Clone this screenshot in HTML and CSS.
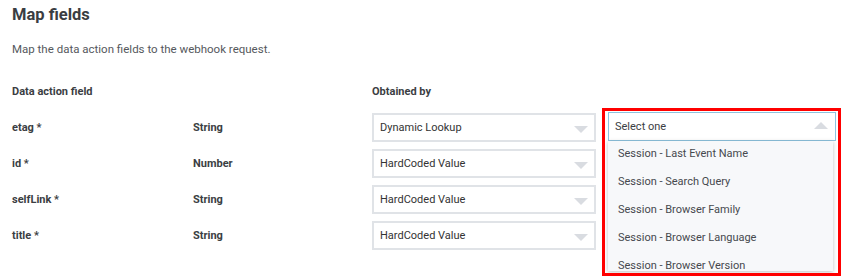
FILE: index.html
```html
<!DOCTYPE html>
<html lang="en">
<head>
  <meta charset="UTF-8" />
  <title>Map fields</title>
  <link rel="stylesheet" href="styles.css">
</head>
<body>
  <div class="page">
    <h1>Map fields</h1>
    <p class="intro">Map the data action fields to the webhook request.</p>

    <div class="fields">
      <div class="head">Data action field</div>
      <div class="head"></div>
      <div class="head">Obtained by</div>
      <div class="head"></div>

      <div class="name">etag *</div>
      <div class="type">String</div>
      <div class="select"><span>Dynamic Lookup</span><i class="arrow"></i></div>
      <div class="picker">
        <div class="select open"><span>Select one</span><i class="arrow up"></i></div>
        <ul class="options">
          <li>Session - Last Event Name</li>
          <li>Session - Search Query</li>
          <li>Session - Browser Family</li>
          <li>Session - Browser Language</li>
          <li>Session - Browser Version</li>
        </ul>
      </div>

      <div class="name">id *</div>
      <div class="type">Number</div>
      <div class="select"><span>HardCoded Value</span><i class="arrow"></i></div>
      <div></div>

      <div class="name">selfLink *</div>
      <div class="type">String</div>
      <div class="select"><span>HardCoded Value</span><i class="arrow"></i></div>
      <div></div>

      <div class="name">title *</div>
      <div class="type">String</div>
      <div class="select"><span>HardCoded Value</span><i class="arrow"></i></div>
      <div></div>
    </div>

    <!-- highlight annotation -->
    <div class="highlight"></div>
  </div>
</body>
</html>
```

FILE: styles.css
```css
* {
  margin: 0;
  padding: 0;
  box-sizing: border-box;
}
body {
  background: #fff;
  font-family: Roboto, "Liberation Sans", sans-serif;
  color: #3b3e43;
}
.page {
  position: relative;
  width: 842px;
  height: 278px;
  padding: 4px 12px 0;
  overflow: hidden;
}
h1 {
  font-size: 16.5px;
  font-weight: 700;
  line-height: 22px;
  color: #3a3d42;
}
.intro {
  margin-top: 15px;
  font-size: 11.5px;
  line-height: 16px;
  color: #55585d;
}
/* Field mapping grid */
.fields {
  margin-top: 27px;
  display: grid;
  grid-template-columns: 181px 179px 235px 1fr;
  grid-template-rows: 22px repeat(4, 29px);
  row-gap: 7px;
  align-items: center;
}
.head {
  align-self: start;
  font-size: 11px;
  font-weight: 700;
  line-height: 16px;
  color: #3b3e43;
}
.name,
.type {
  font-size: 11px;
  font-weight: 700;
  color: #3b3e43;
}
.select {
  position: relative;
  display: flex;
  align-items: center;
  width: 224px;
  height: 29px;
  padding: 0 6px;
  border: 2px solid #e0e3e7;
  background: #fff;
  font-size: 11px;
  color: #333;
}
.arrow {
  position: absolute;
  right: 6px;
  top: 11px;
  width: 0;
  height: 0;
  border-left: 7px solid transparent;
  border-right: 7px solid transparent;
  border-top: 7px solid #d9dce1;
}
.arrow.up {
  top: 9px;
  right: 7px;
  border-top: none;
  border-bottom: 7px solid #d9dce1;
}
/* Open dropdown */
.picker {
  position: relative;
  height: 29px;
}
.select.open {
  width: 228px;
  height: 29px;
  margin: -1px 0 0 1px;
  padding: 0 6px;
  border: 1px solid #8ec3df;
  color: #3b3e43;
}
.options {
  position: absolute;
  left: 1px;
  top: 28px;
  width: 225px;
  height: 130px;
  overflow: hidden;
  list-style: none;
  background: #f7f8fa;
  box-shadow: 0 1px 4px rgba(0, 0, 0, 0.25);
  z-index: 2;
}
.options li {
  height: 28px;
  line-height: 26px;
  padding-left: 10px;
  font-size: 11px;
  color: #46494e;
}
.highlight {
  position: absolute;
  left: 602px;
  top: 108px;
  width: 239px;
  height: 168px;
  border: 3px solid #ff0000;
  pointer-events: none;
  z-index: 3;
}
```
